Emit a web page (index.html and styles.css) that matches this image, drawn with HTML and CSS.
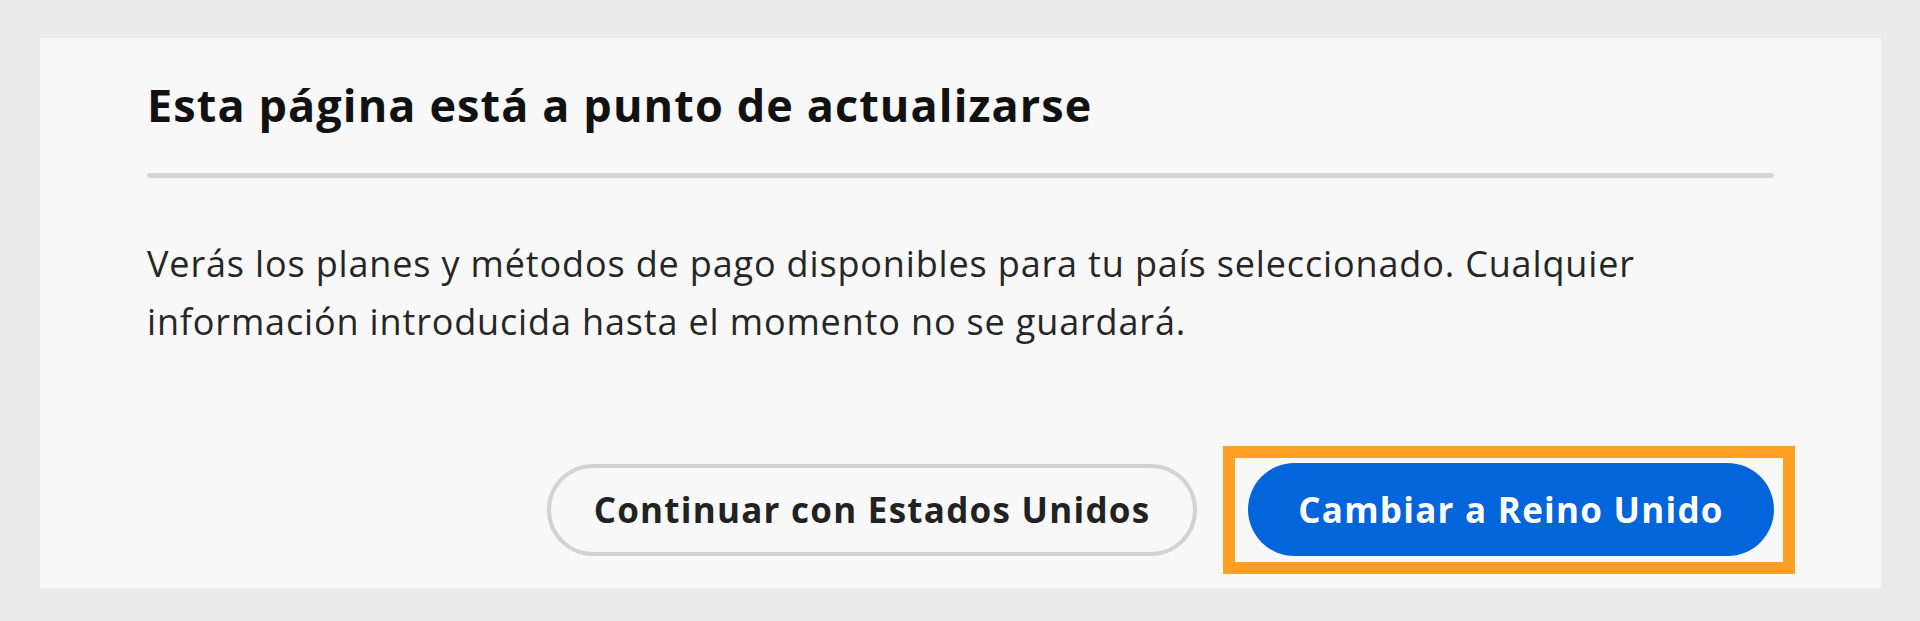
FILE: index.html
```html
<!DOCTYPE html>
<html lang="es">
<head>
<meta charset="utf-8">
<title>Esta página está a punto de actualizarse</title>
<link rel="stylesheet" href="styles.css">
</head>
<body>
  <div class="page">
    <section class="card">
      <h1 class="title">Esta página está a punto de actualizarse</h1>
      <hr class="divider">
      <p class="message">Verás los planes y métodos de pago disponibles para tu país seleccionado. Cualquier información introducida hasta el momento no se guardará.</p>
      <div class="actions">
        <button class="btn btn-secondary" type="button">Continuar con Estados Unidos</button>
        <div class="highlight-wrap">
          <button class="btn btn-primary" type="button">Cambiar a Reino Unido</button>
          <span class="highlight"></span>
        </div>
      </div>
    </section>
  </div>
</body>
</html>
```
FILE: styles.css
```css
html, body {
  margin: 0;
  padding: 0;
}
body {
  background: #ebebeb;
  font-family: "Open Sans", "Lato", sans-serif;
  width: 1920px;
  height: 621px;
  overflow: hidden;
}
.page {
  padding: 38px 39px 0 40px;
}
.card {
  background: #f8f8f8;
  padding: 39px 107px 32px 107px;
}
.title {
  margin: 0;
  font-size: 45px;
  line-height: 56px;
  font-weight: 700;
  letter-spacing: 1.1px;
  color: #111111;
}
.divider {
  margin: 40px 0 0 0;
  border: 0;
  height: 5px;
  border-radius: 3px;
  background: #d5d5d5;
}
.message {
  margin: 57px 0 0 0;
  font-size: 36px;
  line-height: 58px;
  letter-spacing: 0.85px;
  color: #262626;
}
.actions {
  margin-top: 112px;
  display: flex;
  justify-content: flex-end;
  align-items: center;
  gap: 51px;
}
.btn {
  font-family: "Open Sans", "Lato", sans-serif;
  font-size: 35px;
  font-weight: 700;
  letter-spacing: 1.25px;
  border-radius: 50px;
  display: flex;
  align-items: center;
  justify-content: center;
  padding: 0;
  cursor: pointer;
}
.btn-secondary {
  width: 650px;
  height: 92px;
  background: #f8f8f8;
  border: 4px solid #d3d3d3;
  color: #222222;
}
.btn-primary {
  width: 526px;
  height: 93px;
  background: #0265dc;
  border: 0;
  color: #ffffff;
}
.highlight-wrap {
  position: relative;
}
.highlight {
  position: absolute;
  left: -25px;
  top: -17px;
  right: -21px;
  bottom: -18px;
  border: 12px solid #ff9f24;
  pointer-events: none;
}
```
